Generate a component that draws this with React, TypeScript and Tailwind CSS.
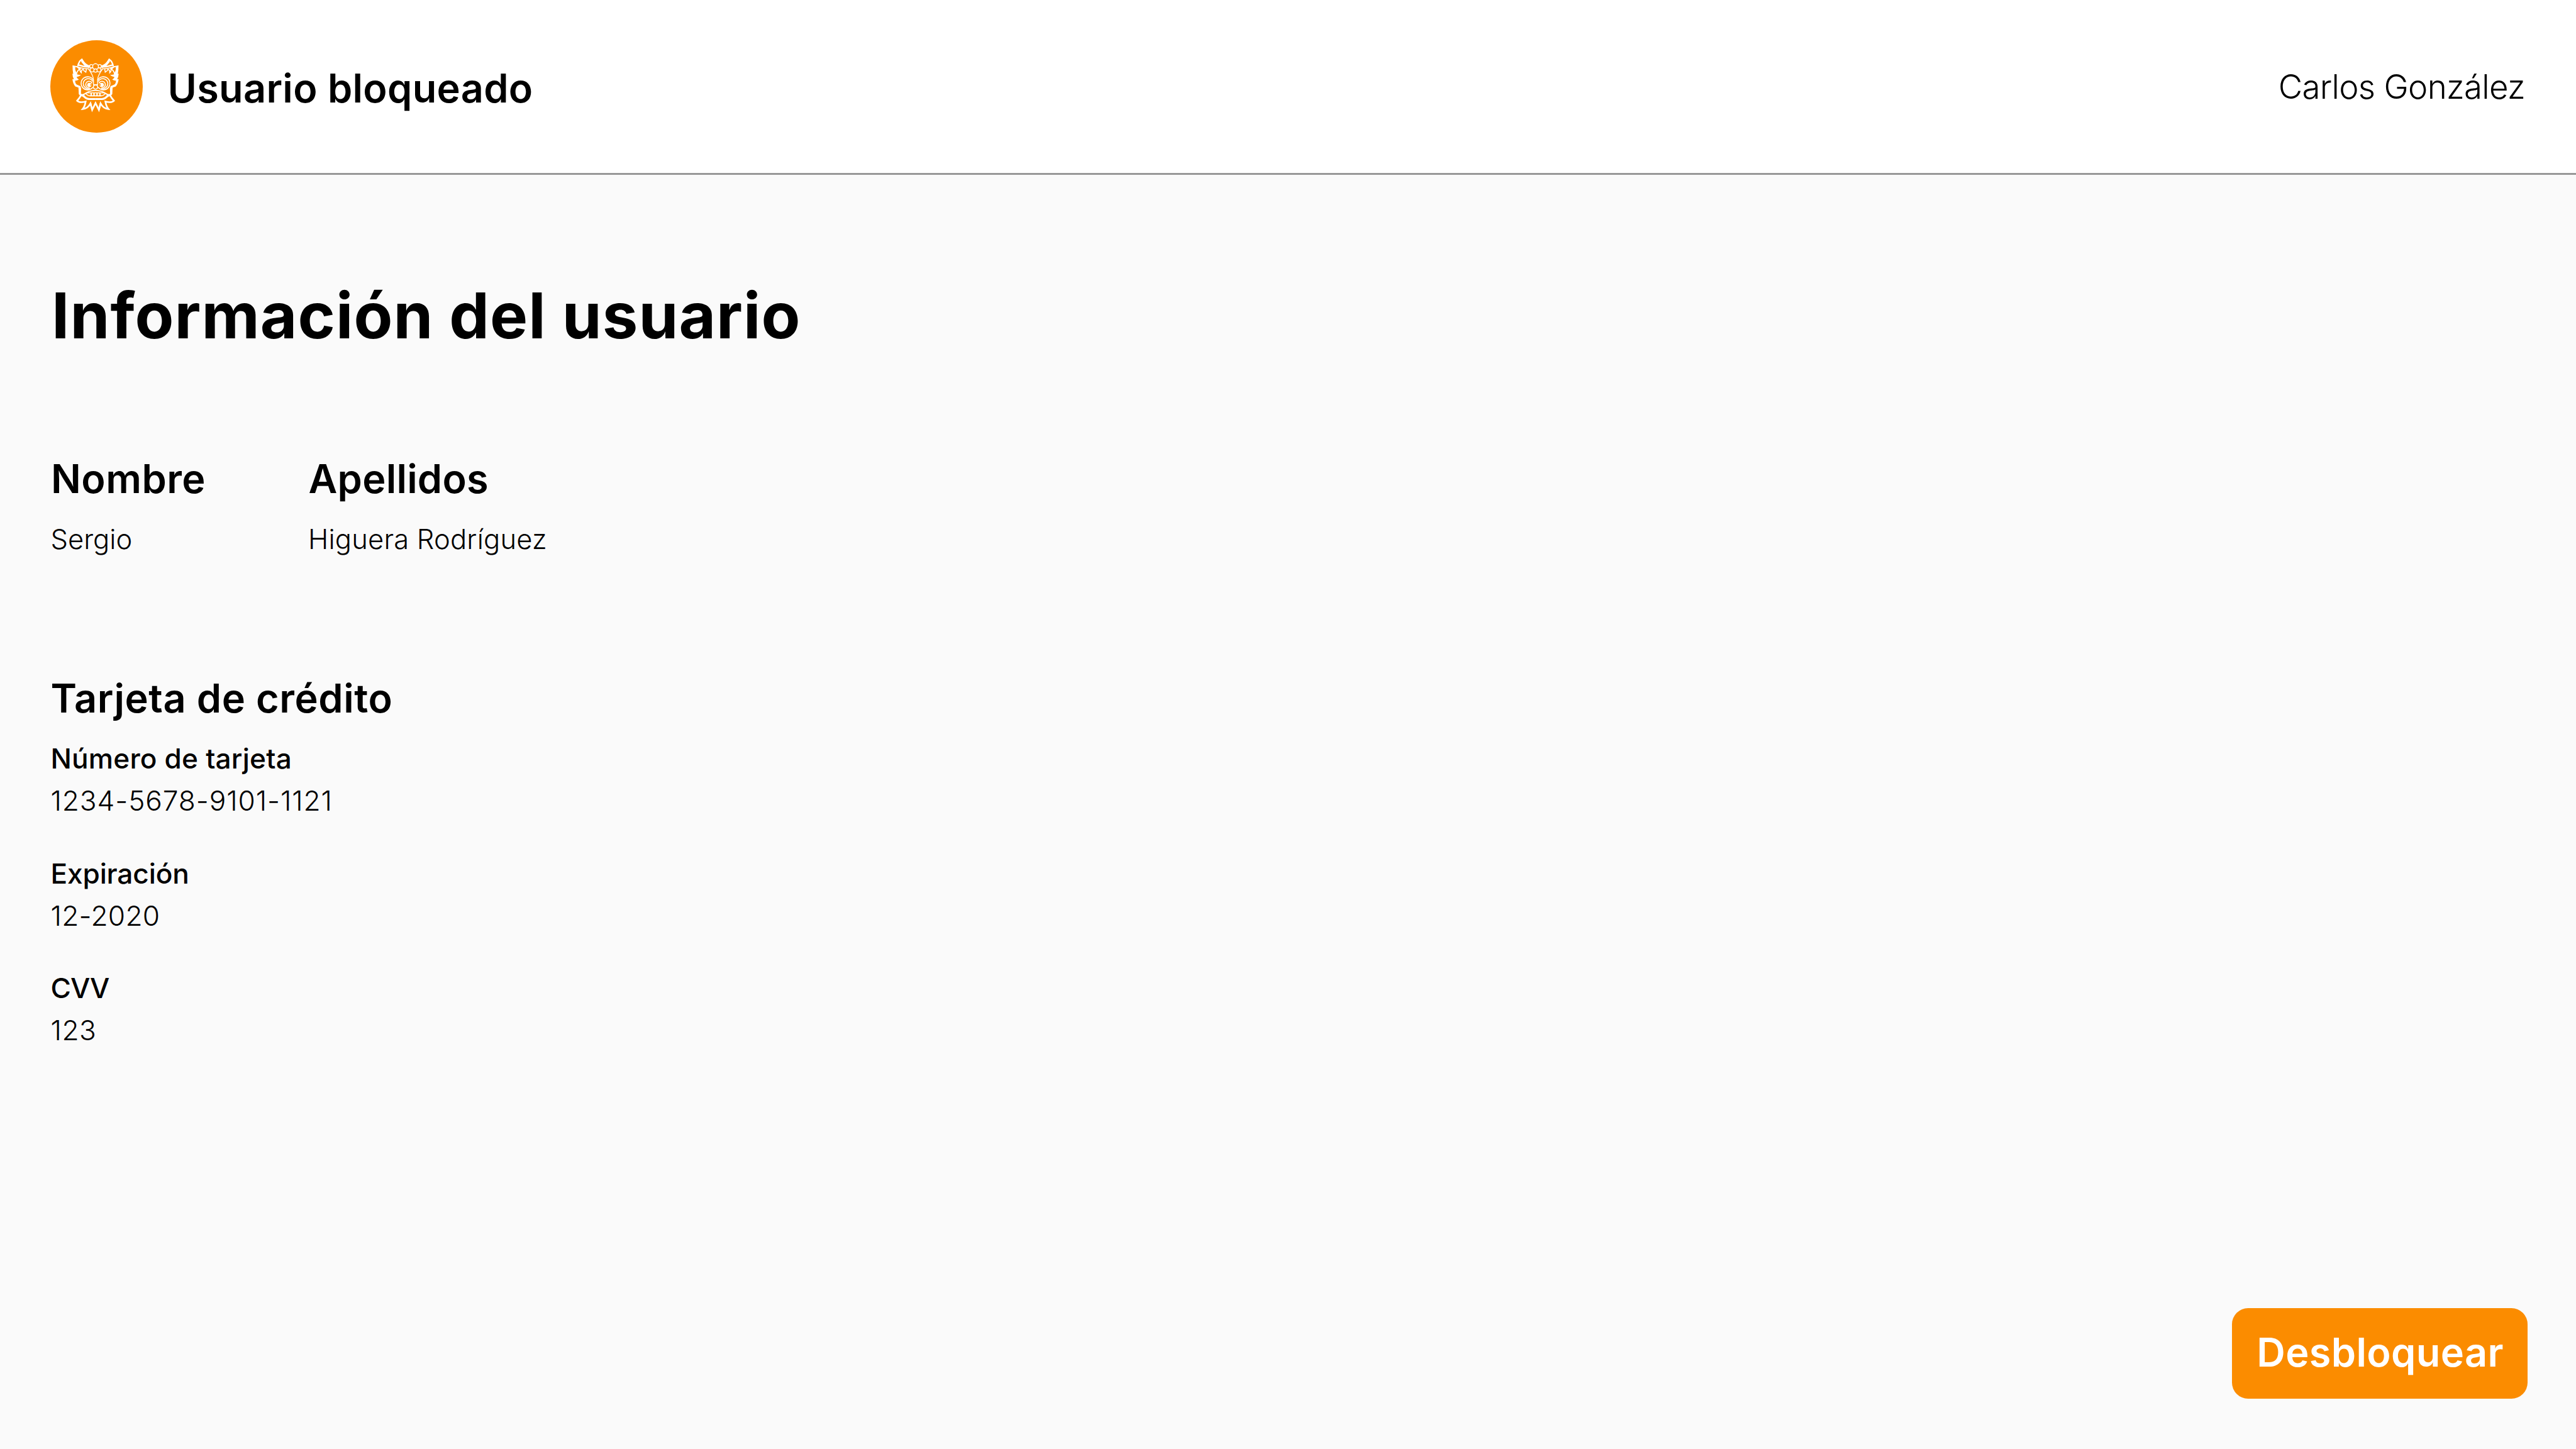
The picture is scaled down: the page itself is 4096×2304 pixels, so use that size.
function FaceHalf() {
  return (
    <g>
      {/* horn */}
      <path d="M195 185Q199 157 217 145L228 161" strokeWidth="9" />
      <path d="M196 177Q230 190 264 190" strokeWidth="9" />
      <path d="M219 137L225 146Q238 172 268 182L262 196L234 183L214 158Z" fill="#fff" stroke="none" />
      {/* fur along the cheek and ear */}
      <path d="M186 188Q225 201 264 202" strokeWidth="6" />
      <path d="M163 180L192 185L214 200L206 207L188 191L174 190Q172 214 192 235Q176 232 173 224Z" fill="#fff" stroke="none" />
      <path d="M176 190Q174 214 187 229Q190 212 207 202Q206 216 215 224Q214 208 226 203Q230 216 242 221L245 202" strokeWidth="6" />
      <path d="M163 181L174 184L180 227Q194 240 213 236Q206 246 188 249Q188 258 201 264Q190 272 178 271Q179 290 190 296L210 304L214 318Q213 338 213 348L222 356L213 366L200 352Q199 326 198 313L179 306Q165 290 162 262L171 263Q162 248 162 229L167 231Q162 206 163 181Z" fill="#fff" stroke="none" />
      {/* brow running down the bridge of the nose */}
      <path d="M259 203Q287 240 288 268V297" strokeWidth="5" />
      {/* eye rings */}
      <path d="M287 268A39 39 0 1 0 284 311" strokeWidth="6" />
      <path d="M284 277A30 30 0 1 0 268 317" strokeWidth="6" />
      <path d="M280 287A20 20 0 1 0 264 315" strokeWidth="6" />
      <circle cx="263" cy="297" r="13" fill="#fff" stroke="none" />
      <circle cx="272" cy="297" r="4" fill="#fb8c00" stroke="none" />
      {/* rosette petals */}
      <circle cx="275" cy="185" r="10" strokeWidth="5" />
      <circle cx="280" cy="207" r="12" strokeWidth="5" />
      {/* lips and jaw */}
      <path d="M212 357Q230 357 248 343Q270 330 300 330" strokeWidth="7" />
      <path d="M241 346Q252 362 268 362H300" strokeWidth="6" />
      <path d="M211 357Q228 359 234 368Q246 381 262 381H300" strokeWidth="12" />
      {/* beard */}
      <path d="M213 359Q204 376 190 391Q204 406 241 396Q236 426 223 441Q254 438 270 407L280 446" strokeWidth="10" />
    </g>
  );
}

function Logo() {
  return (
    <svg viewBox="30 30 552 552" className="size-[147px] shrink-0" fill="none" stroke="#fff" strokeMiterlimit="8">
      <circle cx="306" cy="306" r="276" fill="#fb8c00" stroke="none" />
      <FaceHalf />
      <g transform="translate(600 0) scale(-1 1)">
        <FaceHalf />
      </g>
      <path d="M270 407L280 446L300 405L320 446L330 407" strokeWidth="10" />
      <circle cx="300" cy="187" r="17" fill="#fb8c00" strokeWidth="5" />
      <circle cx="300" cy="211" r="10" fill="#fb8c00" strokeWidth="5" />
      <path d="M286 296H314" strokeWidth="6" />
      <circle cx="300" cy="309" r="13" strokeWidth="6" />
      {/* teeth */}
      <path d="M247 344H353" strokeWidth="5" />
      <path d="M274 344V362M291 344V362M309 344V362M326 344V362" strokeWidth="8" />
    </svg>
  );
}

const cardFields = [
  { label: "Número de tarjeta", value: "1234-5678-9101-1121", labelTracking: "tracking-[0.17px]", valueTracking: "tracking-[0.92px]" },
  { label: "Expiración", value: "12-2020", labelTracking: "tracking-[-0.15px]", valueTracking: "tracking-[0.3px]" },
  { label: "CVV", value: "123", labelTracking: "tracking-[-1px]", valueTracking: "tracking-[0.5px]" },
];

export default function App() {
  return (
    <div className="flex h-[2304px] w-[4096px] flex-col bg-[#fafafa] font-['Inter',sans-serif] text-black">
      <header className="flex h-[278px] shrink-0 items-center justify-between border-b-[3px] border-[#979797] bg-white pr-[81px] pl-20">
        <div className="flex items-center gap-[39.5px]">
          <Logo />
          <h2 className="pt-[5.5px] text-[63px] leading-[74px] font-semibold tracking-[0.3px]">Usuario bloqueado</h2>
        </div>
        <span className="text-[52.75px] leading-[64px] font-light tracking-[-0.67px]">Carlos González</span>
      </header>

      <main className="flex grow flex-col pt-[163px] pr-[76.8px] pb-20 pl-[80.5px]">
        <h1 className="pl-[1.5px] text-[101px] leading-[120px] font-bold tracking-[1.08px]">Información del usuario</h1>

        <section className="mt-[163px] flex">
          <div className="flex w-[409.5px] flex-col gap-[32.4px]">
            <h3 className="pl-[0.5px] text-[63px] leading-[74px] font-semibold tracking-[0.5px]">Nombre</h3>
            <p className="text-[43.5px] leading-[54px] font-light">Sergio</p>
          </div>
          <div className="flex flex-col gap-[32.4px]">
            <h3 className="pl-[0.5px] text-[63px] leading-[74px] font-semibold tracking-[0.25px]">Apellidos</h3>
            <p className="text-[43.5px] leading-[54px] font-light tracking-[0.2px]">Higuera Rodríguez</p>
          </div>
        </section>

        <section className="mt-[188.4px]">
          <h3 className="text-[63px] leading-[74px] font-semibold tracking-[0.6px]">Tarjeta de crédito</h3>
          <dl className="mt-[32.4px] flex flex-col gap-[61.2px]">
            {cardFields.map((f) => (
              <div key={f.label} className="flex flex-col gap-[13.2px] text-[44.2px] leading-[54px]">
                <dt className={`font-medium ${f.labelTracking}`}>{f.label}</dt>
                <dd className={`font-light ${f.valueTracking}`}>{f.value}</dd>
              </div>
            ))}
          </dl>
        </section>

        <button className="mt-auto flex h-36 w-[470.4px] items-center self-end rounded-[25.6px] bg-[#fb8c00] pb-[4px] pl-[39.5px] text-[63px] leading-[74px] font-semibold tracking-[0.38px] text-white">
          Desbloquear
        </button>
      </main>
    </div>
  );
}
